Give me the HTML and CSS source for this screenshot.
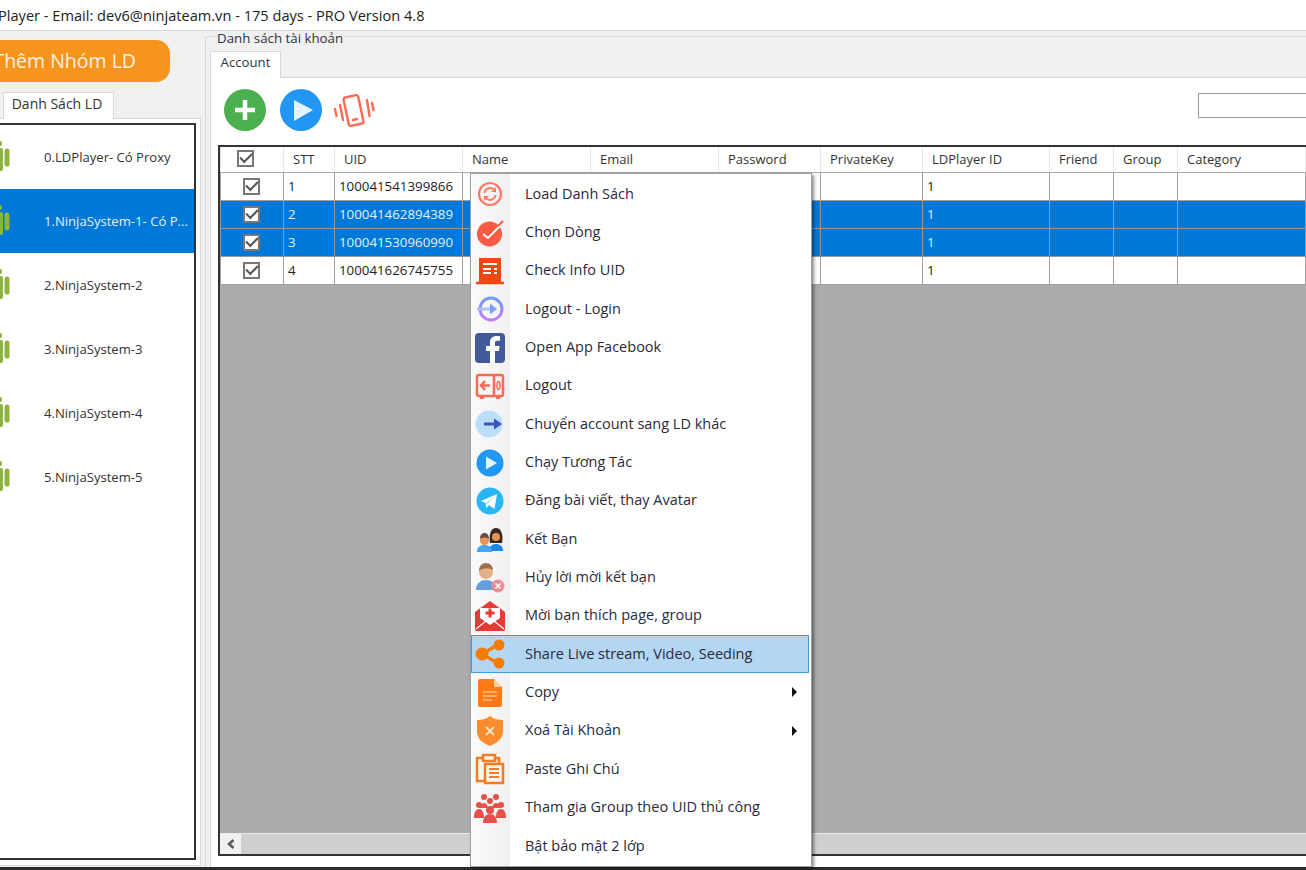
FILE: index.html
```html
<!DOCTYPE html>
<html lang="en">
<head>
    <meta charset="UTF-8">
    <title>Ninja System</title>
    <link rel="stylesheet" href="styles.css">
</head>
<body>
    <svg class="sprites" width="0" height="0">
        <defs>
            <linearGradient id="ring" x1="0" y1="0" x2="0" y2="1">
                <stop offset="0" stop-color="#6f9cf5"/>
                <stop offset="1" stop-color="#c77df0"/>
            </linearGradient>
        </defs>
        <symbol id="android" viewBox="0 0 14 32">
            <rect x="-6" y="7" width="9" height="23" rx="2" fill="#8cb43c"/>
            <rect x="4.500" y="7.500" width="5" height="18" rx="2.500" fill="#8cb43c"/>
            <rect x="-4" y="0" width="6" height="5" rx="2" fill="#8cb43c"/>
        </symbol>
    </svg>

    <div class="titlebar">Player - Email: dev6@ninjateam.vn - 175 days - PRO Version 4.8</div>

    <div class="main">
        <div class="left">
            <button class="add-group">Thêm Nhóm LD</button>
            <div class="tab left-tab">Danh Sách LD</div>
            <div class="left-panel">
                <ul class="ld-list">
                    <li><svg class="ld-icon"><use href="#android"/></svg><span>0.LDPlayer- Có Proxy</span></li>
                    <li class="active"><svg class="ld-icon"><use href="#android"/></svg><span>1.NinjaSystem-1- Có P...</span></li>
                    <li><svg class="ld-icon"><use href="#android"/></svg><span>2.NinjaSystem-2</span></li>
                    <li><svg class="ld-icon"><use href="#android"/></svg><span>3.NinjaSystem-3</span></li>
                    <li><svg class="ld-icon"><use href="#android"/></svg><span>4.NinjaSystem-4</span></li>
                    <li><svg class="ld-icon"><use href="#android"/></svg><span>5.NinjaSystem-5</span></li>
                </ul>
            </div>
        </div>

        <div class="right">
            <div class="group-label"><span>Danh sách tài khoản</span></div>
            <div class="group-body">
                <div class="tab account-tab">Account</div>
                <div class="account-panel">
                    <div class="toolbar">
                        <svg class="tool" viewBox="0 0 42 42"><circle cx="21" cy="21" r="21" fill="#4caf50"/><path d="M21 11v20M11 21h20" stroke="#fff" stroke-width="4.500"/></svg>
                        <svg class="tool" viewBox="0 0 42 42"><circle cx="21" cy="21" r="21" fill="#2196f3"/><path d="M14 11l19 10-19 11z" fill="#e3f2fd"/></svg>
                        <svg class="tool phone" viewBox="0 0 42 36" fill="none" stroke="#fb6a55" stroke-width="2.400" stroke-linecap="round"><rect x="13" y="4" width="15" height="29" rx="2" transform="rotate(-12 20.500 18.500)"/><path d="M20 28l4-1M2 17l1.500 7M7 13l3 15M34 8l2.500 16M39 11l1.500 7"/></svg>
                        <input class="search" type="text">
                    </div>
                    <div class="grid">
                        <table>
                            <colgroup>
                                <col class="c-check"><col class="c-stt"><col class="c-wide"><col class="c-wide"><col class="c-wide"><col class="c-mid"><col class="c-mid"><col class="c-ld"><col class="c-small"><col class="c-small"><col class="c-wide">
                            </colgroup>
                            <thead>
                                <tr>
                                    <th class="check-cell"><span class="check"></span></th>
                                    <th>STT</th><th>UID</th><th>Name</th><th>Email</th><th>Password</th><th>PrivateKey</th><th>LDPlayer ID</th><th>Friend</th><th>Group</th><th>Category</th>
                                </tr>
                            </thead>
                            <tbody>
                                <tr><td class="check-cell"><span class="check"></span></td><td>1</td><td>100041541399866</td><td></td><td></td><td></td><td></td><td>1</td><td></td><td></td><td></td></tr>
                                <tr class="selected"><td class="check-cell"><span class="check"></span></td><td>2</td><td>100041462894389</td><td></td><td></td><td></td><td></td><td>1</td><td></td><td></td><td></td></tr>
                                <tr class="selected"><td class="check-cell"><span class="check"></span></td><td>3</td><td>100041530960990</td><td></td><td></td><td></td><td></td><td>1</td><td></td><td></td><td></td></tr>
                                <tr><td class="check-cell"><span class="check"></span></td><td>4</td><td>100041626745755</td><td></td><td></td><td></td><td></td><td>1</td><td></td><td></td><td></td></tr>
                            </tbody>
                        </table>
                        <div class="grid-empty"></div>
                        <div class="scrollbar">
                            <div class="scroll-btn"><svg width="10" height="10" viewBox="0 0 10 10"><path d="M7.500 1L3 5l4.500 4" fill="none" stroke="#555" stroke-width="2.400"/></svg></div>
                        </div>
                    </div>
                </div>
            </div>
        </div>
    </div>
    <div class="bottom-edge"></div>

    <ul class="menu">
        <li><svg viewBox="0 0 32 32"><circle cx="16" cy="16" r="11" fill="none" stroke="#fb7a66" stroke-width="2.200"/><path d="M10.500 15a5.500 5.500 0 0 1 10-2.500M21.500 17a5.500 5.500 0 0 1-10 2.500" fill="none" stroke="#fb7a66" stroke-width="2"/><path d="M22 9v5h-5zM10 23v-5h5z" fill="#fb7a66"/></svg><span>Load Danh Sách</span></li>
        <li><svg viewBox="0 0 32 32"><circle cx="15.500" cy="17" r="12.500" fill="#fb5b42"/><path d="M9 17l5 4 14-14" fill="none" stroke="#fff" stroke-width="2"/><path d="M24 9l5-5" stroke="#fb5b42" stroke-width="2"/></svg><span>Chọn Dòng</span></li>
        <li><svg viewBox="0 0 32 32"><path d="M5 3h22v24H5z" fill="#f4470f"/><path d="M9 9h14M9 14h8M20 14h3M9 18h8M20 18h3" stroke="#fff" stroke-width="2"/><path d="M3 28h26" stroke="#f4470f" stroke-width="2.500" stroke-linecap="round"/></svg><span>Check Info UID</span></li>
        <li><svg viewBox="0 0 32 32"><circle cx="17" cy="16" r="11" fill="none" stroke="url(#ring)" stroke-width="3"/><path d="M3 16h15" stroke="#a9c4f5" stroke-width="3"/><path d="M16 10.500l7 5.500-7 5.500z" fill="#7f9df2"/></svg><span>Logout - Login</span></li>
        <li><svg viewBox="0 0 32 32"><rect x="1" y="1" width="30" height="30" rx="4" fill="#44599a"/><path d="M21 31V19h4l.6-5H21v-3c0-1.500.6-2.300 2.300-2.300H26V4.300C25.400 4.200 24 4 22.500 4 19 4 16 6.200 16 10.300V14h-4v5h4v12z" fill="#fff"/></svg><span>Open App Facebook</span></li>
        <li><svg viewBox="0 0 32 32"><rect x="3" y="5" width="26" height="21" rx="2" fill="none" stroke="#fb6a55" stroke-width="2.500"/><path d="M20 5v21M16 15.500H7M11 11l-4 4.500 4 4.500" fill="none" stroke="#fb6a55" stroke-width="2.500"/><ellipse cx="24.500" cy="15.500" rx="1.500" ry="4" fill="none" stroke="#fb6a55" stroke-width="1.500"/><path d="M6 28h4M22 28h4" stroke="#fb6a55" stroke-width="2"/></svg><span>Logout</span></li>
        <li><svg viewBox="0 0 32 32"><circle cx="15" cy="16" r="13.500" fill="#bbdefb"/><path d="M10 16h14" stroke="#3f51b5" stroke-width="3"/><path d="M20 10.500l8 5.500-8 5.500z" fill="#3f51b5"/></svg><span>Chuyển account sang LD khác</span></li>
        <li><svg viewBox="0 0 32 32"><circle cx="16" cy="16" r="13.500" fill="#2196f3"/><path d="M12 9.500l11 6.500-11 6.500z" fill="#e3f2fd"/></svg><span>Chạy Tương Tác</span></li>
        <li><svg viewBox="0 0 32 32"><circle cx="16" cy="16" r="13.500" fill="#29b6f6"/><path d="M7 16l16-7-2.500 15-5.500-4-2.500 3-1-5z" fill="#fff"/><path d="M11.500 18l9-7-7 8.500z" fill="#b3e5fc"/></svg><span>Đăng bài viết, thay Avatar</span></li>
        <li><svg viewBox="0 0 32 32"><path d="M15 28c0-5 3-7 7-7s7 2 7 7z" fill="#1e88e5"/><path d="M16 20c-1.500-9 1-15 6-15s7.500 6 6 15z" fill="#3e2723"/><circle cx="22" cy="14" r="4" fill="#e0945c"/><path d="M3 29c0-5 3-7 7.500-7s7.500 2 7.500 7z" fill="#42a5f5"/><circle cx="10.500" cy="17.500" r="4.500" fill="#e8935a"/><path d="M6 16c0-4 2-6 4.500-6s4.500 2 4.500 6c-2-2-7-2-9 0z" fill="#6d4c41"/></svg><span>Kết Bạn</span></li>
        <li><svg viewBox="0 0 32 32"><path d="M2 28c0-7 5-10 10-10s10 3 10 10z" fill="#64a0e0"/><circle cx="12" cy="10" r="7" fill="#e0b088"/><path d="M5 9c0-5 3-8 7-8s7 3 7 7c-3-2-10-3-14 1z" fill="#a1714f"/><circle cx="24" cy="24" r="6.500" fill="#ef8a93"/><path d="M21.500 21.500l5 5M26.500 21.500l-5 5" stroke="#fff" stroke-width="1.500"/></svg><span>Hủy lời mời kết bạn</span></li>
        <li><svg viewBox="0 0 32 32"><path d="M1 12L16 1l15 11v17a2 2 0 0 1-2 2H3a2 2 0 0 1-2-2z" fill="#e53935"/><path d="M6 8h20v10l-10 7-10-7z" fill="#fff"/><path d="M2 29l10-8M30 29l-10-8" stroke="#fff" stroke-width="1.200"/><path d="M16 8.500v9M11.500 13h9" stroke="#e53935" stroke-width="3"/></svg><span>Mời bạn thích page, group</span></li>
        <li class="hover"><svg viewBox="0 0 32 32"><circle cx="8" cy="16" r="6.500" fill="#f57c00"/><circle cx="25" cy="7" r="5.500" fill="#f57c00"/><circle cx="25" cy="25" r="5.500" fill="#f57c00"/><path d="M13 13l7-4M13 19l7 4" stroke="#f57c00" stroke-width="3.500"/></svg><span>Share Live stream, Video, Seeding</span></li>
        <li class="has-sub"><svg viewBox="0 0 32 32"><path d="M6 2h14l8 8v18a2 2 0 0 1-2 2H6a2 2 0 0 1-2-2V4a2 2 0 0 1 2-2z" fill="#ff7a14"/><path d="M20 2l8 8h-8z" fill="#ffd0a8"/><path d="M9 15h14M9 19h14M9 23h9" stroke="#ffc08c" stroke-width="1.500"/></svg><span>Copy</span></li>
        <li class="has-sub"><svg viewBox="0 0 32 32"><path d="M16 1c4 3 8 4 13 4v11c0 8-6 12-13 15C9 28 3 24 3 16V5c5 0 9-1 13-4z" fill="#fb8c2e"/><path d="M12 12l8 8M20 12l-8 8" stroke="#ffe0c2" stroke-width="2"/></svg><span>Xoá Tài Khoản</span></li>
        <li><svg viewBox="0 0 32 32"><path d="M10 5H3v23h7" fill="none" stroke="#f57c1f" stroke-width="2.500"/><path d="M9 2h12v6H9zM21 5h4v5" fill="none" stroke="#f57c1f" stroke-width="2.500"/><path d="M11 11h18v19H11z" fill="none" stroke="#f57c1f" stroke-width="2.500"/><path d="M15 16h10M15 20h10M15 24h10" stroke="#f57c1f" stroke-width="2"/></svg><span>Paste Ghi Chú</span></li>
        <li><svg viewBox="0 0 32 32" fill="#e8504a"><circle cx="10" cy="5" r="3"/><circle cx="22" cy="5" r="3"/><circle cx="16" cy="9" r="3"/><circle cx="5" cy="13" r="3"/><circle cx="27" cy="13" r="3"/><circle cx="16" cy="18" r="4"/><path d="M0 26c0-6 2-9 5-9s5 3 5 9zM22 26c0-6 2-9 5-9s5 3 5 9zM9 31c0-6 3-9 7-9s7 3 7 9z"/><path d="M6 16c0-3 2-5 4-5s4 2 4 5zM18 16c0-3 2-5 4-5s4 2 4 5z"/></svg><span>Tham gia Group theo UID thủ công</span></li>
        <li><span class="no-icon"></span><span>Bật bảo mật 2 lớp</span></li>
    </ul>
</body>
</html>
```

FILE: styles.css
```css
* {
    box-sizing: border-box;
}

html, body {
    margin: 0;
    height: 870px;
    overflow: hidden;
}

body {
    font-family: "Open Sans", "Noto Sans", sans-serif;
    background: #f0f0f0;
    color: #222;
    display: flex;
    flex-direction: column;
}

.sprites {
    position: absolute;
}

.titlebar {
    height: 31px;
    flex: none;
    background: #fff;
    border-bottom: 1px solid #d9d9d9;
    font-size: 14.6px;
    line-height: 30px;
    margin-left: -2px;
    white-space: nowrap;
}

.main {
    flex: 1;
    display: flex;
    min-height: 0;
}

.left {
    width: 205px;
    flex: none;
    padding-top: 9px;
}

.add-group {
    display: block;
    width: 190px;
    height: 42px;
    margin-left: -20px;
    border: none;
    border-radius: 14px;
    background: #f7941d;
    color: #fdf1df;
    font-family: inherit;
    font-size: 19.5px;
    text-align: right;
    padding: 0 34px 2px 0;
}

.tab {
    background: #fff;
    border: 1px solid #d9d9d9;
    border-bottom: none;
    font-size: 14px;
    color: #333;
}

.left-tab {
    width: 111px;
    height: 27px;
    margin: 10px 0 -1px 3px;
    padding-right: 3px;
    line-height: 22px;
    text-align: center;
    position: relative;
    z-index: 1;
}

.left-panel {
    width: 201px;
    height: 748px;
    background: #fff;
    border: 1px solid #d9d9d9;
    border-left: none;
    padding: 4px 4px 0 0;
}

.ld-list {
    list-style: none;
    margin: 0;
    padding: 0;
    height: 737px;
    background: #fff;
    border: 2px solid #333;
    border-left: none;
}

.ld-list li {
    height: 64px;
    display: flex;
    align-items: center;
    font-size: 13.1px;
    color: #333;
    white-space: nowrap;
}

.ld-list li.active {
    background: #0078d7;
    color: #e4f1fb;
}

.ld-icon {
    width: 14px;
    height: 32px;
    flex: none;
    margin-right: 30px;
}

.right {
    flex: 1;
    min-width: 0;
    display: flex;
    flex-direction: column;
}

.group-label {
    height: 16px;
    margin-top: -1px;
    flex: none;
    display: flex;
    font-size: 13.3px;
    line-height: 16px;
    color: #333;
}

.group-label::before {
    content: "";
    width: 11px;
    height: 9px;
    align-self: flex-end;
    border-top: 1px solid #d9d9d9;
    border-left: 1px solid #d9d9d9;
    border-top-left-radius: 3px;
}

.group-label span {
    padding-right: 1px;
}

.group-label::after {
    content: "";
    flex: 1;
    height: 9px;
    align-self: flex-end;
    border-top: 1px solid #d9d9d9;
}

.group-body {
    flex: 1;
    min-height: 0;
    border-left: 1px solid #d9d9d9;
    padding: 5px 0 0 4px;
}

.account-tab {
    width: 71px;
    height: 27px;
    margin-bottom: -1px;
    font-size: 13.2px;
    line-height: 20px;
    text-align: center;
    position: relative;
    z-index: 1;
}

.account-panel {
    height: 790px;
    background: #fff;
    border-top: 1px solid #d9d9d9;
    border-left: 1px solid #d9d9d9;
    padding: 0 0 0 7px;
}

.toolbar {
    height: 67px;
    display: flex;
    align-items: center;
    padding: 0 0 3px 6px;
}

.tool {
    width: 42px;
    height: 42px;
    flex: none;
    margin-right: 14px;
}

.phone {
    width: 42px;
    height: 36px;
    margin-left: -3px;
}

.search {
    margin-left: auto;
    width: 120px;
    height: 25px;
    margin-right: -12px;
    margin-top: -9px;
    border: 1px solid #999;
    background: #fff;
}

.grid {
    height: 711px;
    border: 2px solid #333;
    border-right: none;
    background: #ababab;
    display: flex;
    flex-direction: column;
}

table {
    border-collapse: collapse;
    table-layout: fixed;
    width: 1085px;
    flex: none;
    font-size: 13.3px;
}

.c-check { width: 63px; }
.c-stt { width: 51px; }
.c-wide { width: 128px; }
.c-mid { width: 102px; }
.c-ld { width: 127px; }
.c-small { width: 64px; }

th, td {
    border: 1px solid #a0a0a0;
    text-align: left;
    padding: 0 4px;
    overflow: hidden;
    white-space: nowrap;
    font-weight: normal;
}

th {
    height: 25px;
    padding-left: 9px;
    background: #fff;
    border-top: none;
    border-left-color: #e6e6e6;
    border-right-color: #e6e6e6;
    border-bottom-color: #a8a8a8;
    font-size: 13px;
    color: #333;
}

td {
    height: 28px;
    background: #fff;
    color: #222;
}

tr.selected td {
    background: #0078d7;
    color: #e4f1fb;
    border-color: #8c9aa6;
}

.check-cell {
    text-align: center;
    padding: 0;
}

td.check-cell {
    padding-right: 2px;
}

th.check-cell {
    padding: 0 14px 3px 0;
}

.check {
    display: inline-block;
    width: 17px;
    height: 17px;
    border: 2px solid #777;
    background: #fff;
    vertical-align: middle;
    position: relative;
}

.check::after {
    content: "";
    position: absolute;
    left: 1px;
    top: 1px;
    width: 10px;
    height: 5px;
    border-left: 2px solid #555;
    border-bottom: 2px solid #555;
    transform: rotate(-45deg);
}

.grid-empty {
    flex: 1;
}

.scrollbar {
    height: 21px;
    flex: none;
    background: #cfcfcf;
    border-top: 1px solid #e8e8e8;
    display: flex;
}

.scroll-btn {
    width: 21px;
    background: #f0f0f0;
    display: flex;
    align-items: center;
    justify-content: center;
}

.bottom-edge {
    height: 3px;
    flex: none;
    background: #2b2b2b;
}

/* context menu floats over the grid */
.menu {
    position: absolute;
    left: 470px;
    top: 173px;
    width: 342px;
    height: 694px;
    margin: 0;
    padding: 1px 2px 0 0;
    list-style: none;
    border: 1px solid #a0a0a0;
    box-shadow: 2px 2px 3px rgba(0, 0, 0, 0.45);
    background: linear-gradient(to right, #fafafa, #f0f0f0 39px, #fff 39px);
    font-size: 14.5px;
    color: #2a2a3a;
}

.menu li {
    height: 38.35px;
    display: flex;
    align-items: center;
    position: relative;
    white-space: nowrap;
}

.menu li span {
    margin-bottom: 2px;
}

.menu svg {
    width: 32px;
    height: 32px;
    flex: none;
    margin: 0 19px 0 3px;
}

.no-icon {
    width: 54px;
    flex: none;
}

.menu li.hover {
    background: #b3d7f3;
    outline: 1px solid #3d9be0;
    outline-offset: -1px;
}

.has-sub::after {
    content: "";
    position: absolute;
    right: 12px;
    top: 14px;
    border-left: 5px solid #111;
    border-top: 5px solid transparent;
    border-bottom: 5px solid transparent;
}
```
